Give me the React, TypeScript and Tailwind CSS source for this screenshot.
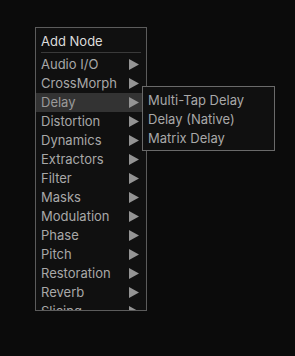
import React from "react";

const categories = [
  "Audio I/O",
  "CrossMorph",
  "Delay",
  "Distortion",
  "Dynamics",
  "Extractors",
  "Filter",
  "Masks",
  "Modulation",
  "Phase",
  "Pitch",
  "Restoration",
  "Reverb",
  "Slicing",
];

const delayItems = ["Multi-Tap Delay", "Delay (Native)", "Matrix Delay"];

function Arrow() {
  return (
    <svg width="10" height="11" viewBox="0 0 10 11" className="shrink-0">
      <polygon points="0,0 10,5.5 0,11" fill="#949494" />
    </svg>
  );
}

export default function App() {
  return (
    <div
      className="relative h-[356px] w-[295px] overflow-hidden bg-[#0b0b0b] text-[13px]"
      style={{ fontFamily: "Inter, 'Noto Sans', sans-serif" }}
    >
      {/* Main menu */}
      <div className="absolute left-[35px] top-[27px] flex h-[284px] w-[112px] flex-col overflow-hidden border border-[#5c5c5c] bg-[#101010]">
        <div className="mt-[4px] flex h-[19px] shrink-0 items-center pl-[5px] text-[#dcdcdc]">
          Add Node
        </div>
        <div className="mx-[5px] mt-[1px] h-px shrink-0 bg-[#3a3a3a]" />
        <div className="mt-[2px] flex flex-col">
          {categories.map((c) => (
            <div
              key={c}
              className={
                "flex h-[19px] shrink-0 items-center justify-between pl-[5px] pr-[7px] " +
                (c === "Delay" ? "bg-[#333333] text-[#9a9a9a]" : "text-[#a8a8a8]")
              }
            >
              <span>{c}</span>
              <Arrow />
            </div>
          ))}
        </div>
      </div>

      {/* Delay submenu */}
      <div className="absolute left-[142px] top-[86px] flex w-[133px] flex-col border border-[#6a6a6a] bg-[#101010] pb-[2px] pt-[4px]">
        {delayItems.map((d) => (
          <div key={d} className="flex h-[19px] items-center pl-[5px] text-[#a8a8a8]">
            {d}
          </div>
        ))}
      </div>
    </div>
  );
}
